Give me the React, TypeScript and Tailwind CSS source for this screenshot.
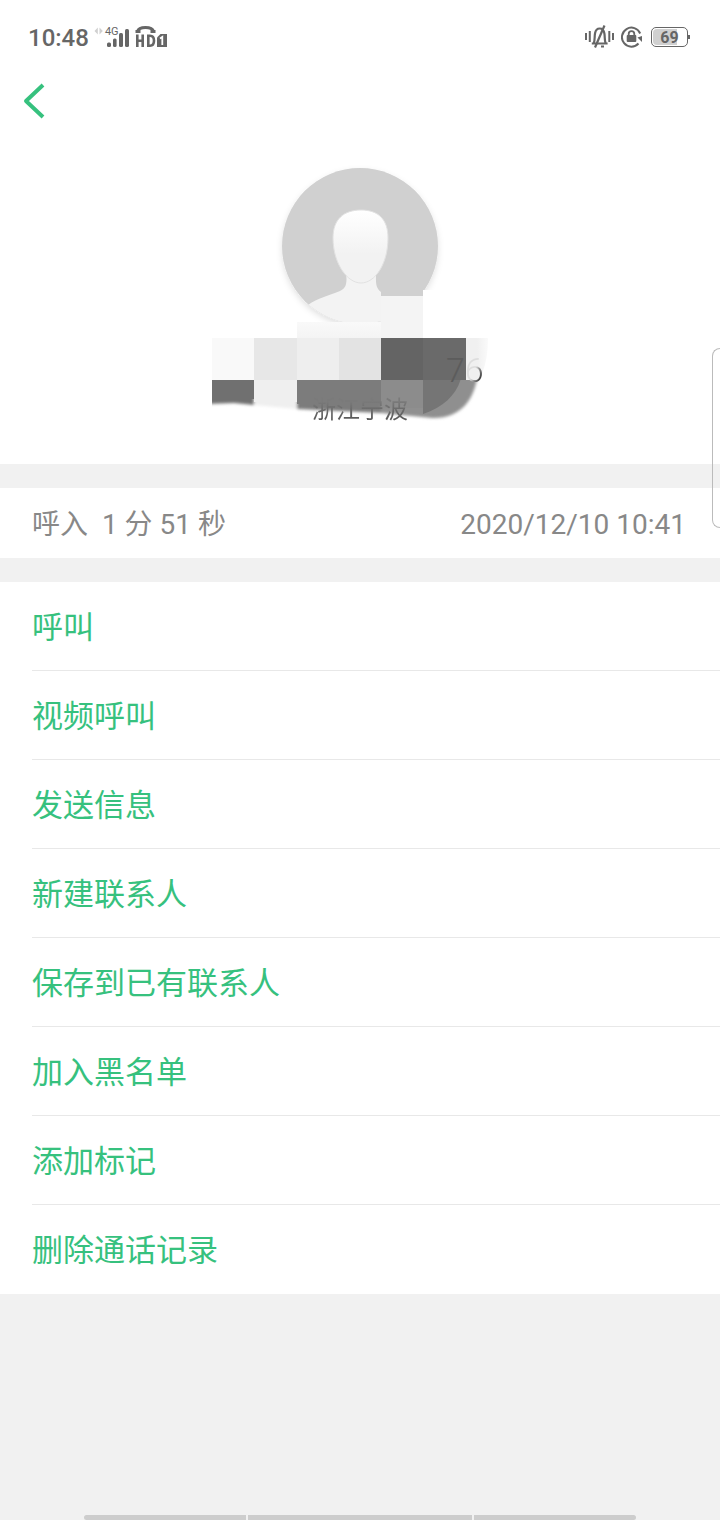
const actions = [
  '呼叫',
  '视频呼叫',
  '发送信息',
  '新建联系人',
  '保存到已有联系人',
  '加入黑名单',
  '添加标记',
  '删除通话记录',
];

const SignalIcon = () => (
  <svg width="36" height="24" viewBox="94 24 36 24" fill="#666" aria-hidden="true">
    <path d="M97.800 26.500v7L94.500 30zM99.500 26.500v7l3.300-3.500z" fill="#d0d0d0" />
    <rect x="107" y="41.500" width="4" height="4.500" rx="1.500" />
    <rect x="113" y="37.500" width="3.600" height="8.500" rx="1.500" />
    <rect x="119" y="32" width="4" height="14" rx="1.500" />
    <rect x="125" y="28" width="4" height="18" rx="1.500" />
  </svg>
);

const VolteIcon = () => (
  <svg width="34" height="24" viewBox="134 24 34 24" fill="none" aria-hidden="true">
    <path d="M137.500 30.500C139 25.300 152 25.300 153.500 30.500" stroke="#666" strokeWidth="3" />
    <path d="M135.500 29h5v3h-5zM150.500 29h5v3h-5z" fill="#666" />
    <path d="M137.300 33.500V46M142.700 33.500V46M137 39.700h6" stroke="#666" strokeWidth="2.600" />
    <path d="M148.300 34.800v9.900h1.700c3.400 0 4-2 4-4.900s-.6-5-4-5z" stroke="#666" strokeWidth="2.600" />
    <path d="M157 36.500l3.500-3.500h6.500v13h-10z" fill="#666" />
    <path d="M160 37.500l2.300-1.500v8" stroke="#fff" strokeWidth="1.800" />
  </svg>
);

const MuteIcon = () => (
  <svg width="30" height="24" viewBox="584 25 30 24" fill="none" stroke="#666" aria-hidden="true">
    <path d="M585 33v7M588.800 31v11M608.300 31v11M612 33v7" strokeWidth="2" />
    <path d="M590.800 43.500h15.800M592.800 43c1.200-3 .6-6 1.200-9.500.6-3.500 2.200-5 4.700-5s4.100 1.500 4.700 5c.6 3.500 0 6.500 1.200 9.500M600 46.500h3" strokeWidth="2.200" />
    <path d="M603.500 25.500L594 47.500" strokeWidth="2.200" />
  </svg>
);

const RotationLockIcon = () => (
  <svg width="22" height="24" viewBox="620 25 22 24" fill="none" stroke="#666" aria-hidden="true">
    <path d="M637.500 43.500A9.500 9.500 0 1 1 639.200 33.500" strokeWidth="2" />
    <path d="M636.500 37.500l4.500-1.500v6z" fill="#666" stroke="none" />
    <rect x="625.700" y="35" width="9.600" height="7" rx="1" fill="#666" stroke="none" />
    <path d="M627.700 36v-2a2.800 2.800 0 0 1 5.600 0v2" strokeWidth="1.800" />
  </svg>
);

const Portrait = () => (
  <svg className="block h-full w-full" viewBox="200 160 320 270" aria-hidden="true">
    <defs>
      <linearGradient id="face" x1="0" y1="0" x2="0" y2="1">
        <stop offset="0" stopColor="#fff" />
        <stop offset="0.25" stopColor="#fafafa" />
        <stop offset="0.6" stopColor="#f2f2f2" />
      </linearGradient>
      <linearGradient id="fade" x1="0" y1="0" x2="0" y2="1">
        <stop offset="0" stopColor="#f9f9f9" />
        <stop offset="1" stopColor="#f4f4f4" />
      </linearGradient>
      <linearGradient id="tail" x1="0" y1="0" x2="1" y2="0">
        <stop offset="0.5" stopColor="#f0f0f0" />
        <stop offset="1" stopColor="#fafafa" />
      </linearGradient>
      <filter id="shadow" x="-10%" y="-10%" width="120%" height="120%">
        <feDropShadow dx="0" dy="3" stdDeviation="3" floodColor="#000" floodOpacity="0.12" />
      </filter>
      <filter id="soft" x="-5%" y="-10%" width="110%" height="120%">
        <feGaussianBlur stdDeviation="1.5" />
      </filter>
      <clipPath id="disc">
        <circle cx="360" cy="246" r="78" />
      </clipPath>
      <clipPath id="lower">
        <path d="M212 380h290v50H212z" />
      </clipPath>
    </defs>

    <circle cx="360" cy="246" r="78" fill="#d0d0d0" filter="url(#shadow)" />
    <g clipPath="url(#disc)">
      <path d="M346 272c1 10 1 16-6 19-12 5-22 7-32 14v25h110v-32l-37-6c-6-4-5-11-5-20z" fill="#f3f3f3" />
    </g>
    <path d="M361 210c17 0 27 9 27 28 0 26-13 45-27 45s-28-20-28-45c0-19 11-28 28-28z" fill="url(#face)" stroke="#e2e2e2" />

    {/* mosaic over the number */}
    <path d="M297 322h84v16h-84z" fill="url(#fade)" />
    <path d="M381 274h42v22h-42z" fill="#d0d0d0" />
    <path d="M423 290h14v25h-14z" fill="#fff" />
    <path d="M381 296h42v42h-42z" fill="#f4f4f4" />
    <g clipPath="url(#lower)">
      <g filter="url(#soft)">
        <path d="M205 370h49v35l-20-2-29 1z" fill="#707070" />
        <path d="M254 370h43v39l-43-4z" fill="#efefef" />
        <path d="M297 370h84v43l-84-4z" fill="#7c7c7c" />
        <path d="M381 370h97c-2 30-18 49-46 48l-51-5z" fill="#8f8f8f" />
      </g>
      <path d="M212 380h42v19h-42z" fill="#707070" />
      <path d="M254 380h43v22h-43z" fill="#efefef" />
      <path d="M297 380h84v24h-84z" fill="#7c7c7c" />
      <path d="M381 380h42v28h-42z" fill="#8c8c8c" />
      <path d="M423 378h38c-4 16-17 29-38 36z" fill="#757575" />
    </g>
    <path d="M212 338h42v42h-42z" fill="#f9f9f9" />
    <path d="M254 338h43v42h-43z" fill="#e7e7e7" />
    <path d="M297 338h42v42h-42z" fill="#eee" />
    <path d="M339 338h42v42h-42z" fill="#e3e3e3" />
    <path d="M381 338h42v42h-42z" fill="#646464" />
    <path d="M423 338h43v42h-43z" fill="#6a6a6a" />
    <path d="M466 338h22c0 17-3 31-9 42h-13z" fill="url(#tail)" />
  </svg>
);

export default function App() {
  return (
    <div className="relative flex min-h-screen flex-col overflow-hidden bg-[#f1f1f1] font-['Roboto','Noto_Sans_CJK_SC',sans-serif]">
      <div className="flex h-[74px] items-center justify-between bg-white pl-7 pr-8 text-[#666]">
        <div className="flex items-center">
          <span className="pt-px text-2xl font-medium">10:48</span>
          <span className="relative ml-[5px]">
            <SignalIcon />
            <span className="absolute left-[11px] top-px text-[11px] leading-3">4G</span>
          </span>
          <span className="ml-1">
            <VolteIcon />
          </span>
        </div>
        <div className="flex items-center gap-[6px]">
          <MuteIcon />
          <RotationLockIcon />
          <div className="relative ml-[2px] flex h-5 w-[37px] items-center justify-center rounded-[5px] border border-[#666] bg-white text-base font-bold">
            <span className="absolute inset-y-px left-px w-6 rounded-l bg-[#d0d0d0]" />
            <span className="relative pt-px">69</span>
            <span className="absolute -right-[3px] h-1 w-[2px] bg-[#666]" />
          </div>
        </div>
      </div>

      <header className="flex h-[54px] items-center bg-white pl-5">
        <button type="button" aria-label="返回">
          <svg width="28" height="38" viewBox="0 0 28 38" fill="none" stroke="#36c17e" strokeWidth="4">
            <path d="M23 3L6 19L23 35" strokeLinejoin="round" />
          </svg>
        </button>
      </header>

      <section className="flex h-[336px] justify-center bg-white pt-8">
        <div className="relative h-[270px] w-[320px]">
          <Portrait />
          <div className="absolute left-[246px] top-[190px] text-[34px] font-light leading-10">
            <span className="text-[#5c5c5c]">7</span>
            <span className="bg-linear-to-br from-[#ddd] from-50% to-[#444] to-75% bg-clip-text text-transparent">6</span>
          </div>
          <span className="absolute inset-x-0 top-[236px] bg-linear-to-b from-[#7a7a7a] from-20% to-[#5a5a5a] to-80% bg-clip-text text-center text-2xl leading-7 text-transparent">
            浙江宁波
          </span>
        </div>
      </section>

      <section className="my-6 flex h-[70px] items-center justify-between bg-white pl-8 pr-[34px] pt-1 text-[28px] text-[#888]">
        <span className="whitespace-pre">呼入  1 分 51 秒</span>
        <time>2020/12/10 10:41</time>
      </section>

      <ul className="bg-white pl-8">
        {actions.map(action => (
          <li key={action} className="h-[89px] border-b border-[#e8e8e8] last:border-b-0">
            <button type="button" className="h-full w-full pt-1 text-left text-[31px] text-[#36c17e]">
              {action}
            </button>
          </li>
        ))}
      </ul>

      <div className="mx-[84px] mt-auto flex h-[5px] gap-[2px] overflow-hidden rounded-full">
        <span className="flex-1 bg-[#cdcdcd]" />
        <span className="w-[224px] bg-[#cdcdcd]" />
        <span className="flex-1 bg-[#cdcdcd]" />
      </div>

      {/* edge handle */}
      <div className="absolute right-0 top-[348px] h-[180px] w-2 rounded-l-lg border border-r-0 border-[#bbb]" />
    </div>
  );
}
